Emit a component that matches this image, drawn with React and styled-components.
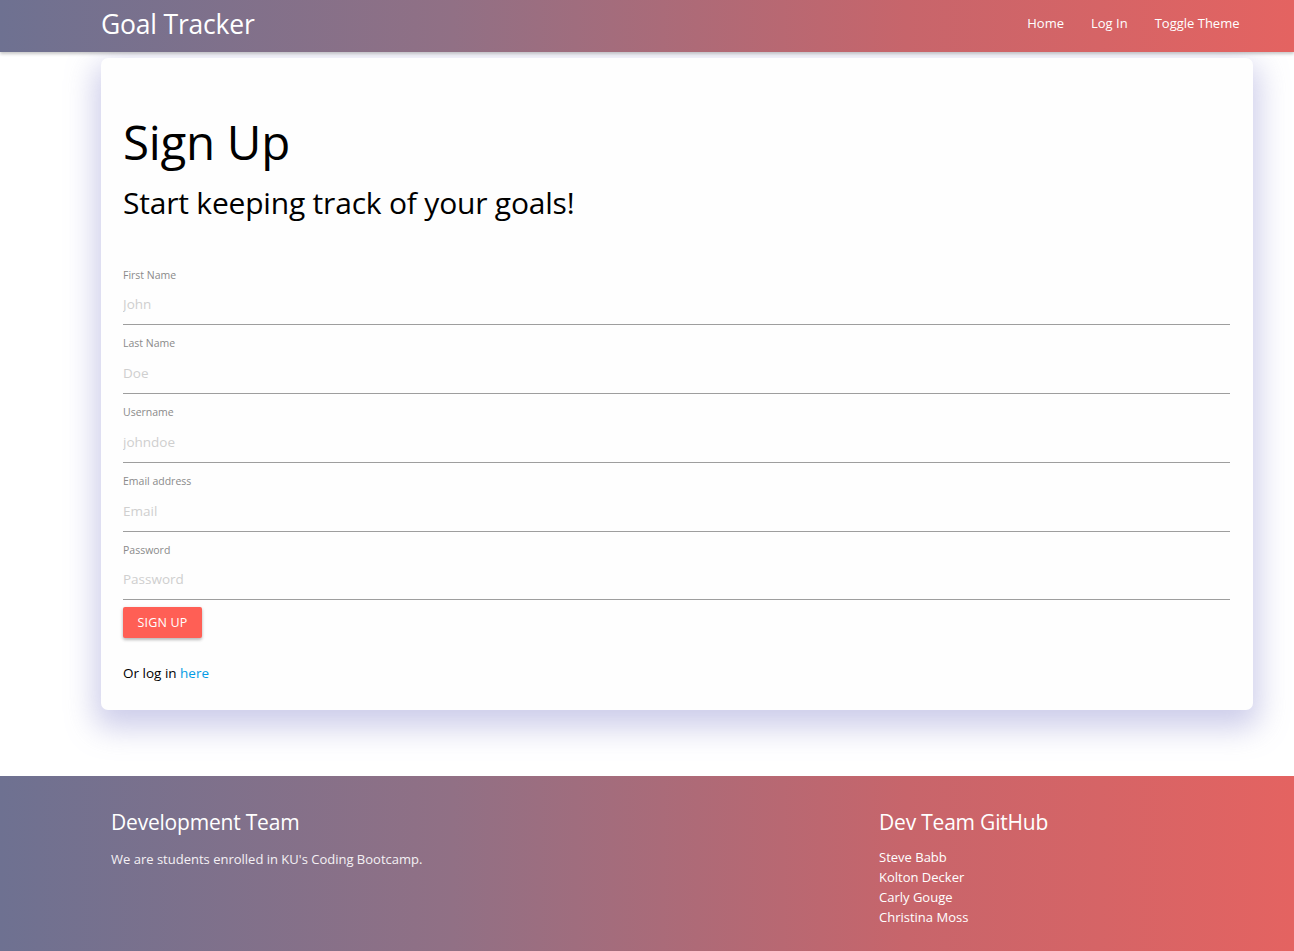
import React from "react";
import styled, { createGlobalStyle } from "styled-components";

const Global = createGlobalStyle`
  html, body { margin: 0; padding: 0; }
  body {
    font-family: "Open Sans", "Noto Sans", sans-serif;
    background: #ffffff;
    color: #000;
  }
  * { box-sizing: border-box; }
`;

const gradient = "linear-gradient(90deg, #6e7191 0%, #917085 35%, #c7656b 70%, #e46361 100%)";

const Page = styled.div`
  min-height: 951px;
  display: flex;
  flex-direction: column;
`;

const Nav = styled.nav`
  height: 52px;
  background: ${gradient};
  box-shadow: 0 2px 3px rgba(0, 0, 0, 0.22);
  position: relative;
  z-index: 2;
`;

const Container = styled.div`
  width: 1152px;
  margin: 0 0 0 101px;
`;

const NavInner = styled(Container)`
  height: 100%;
  display: flex;
  align-items: center;
  justify-content: space-between;
`;

const Brand = styled.a`
  color: #fff;
  font-size: 26.5px;
  letter-spacing: -0.2px;
  text-decoration: none;
  line-height: 1;
  margin-top: -4px;
`;

const NavLinks = styled.ul`
  list-style: none;
  margin: 0;
  padding: 0;
  display: flex;
  margin-top: -6px;
`;

const NavLink = styled.a`
  color: #fff;
  font-size: 13px;
  padding: 0 13.5px;
  text-decoration: none;
  display: block;
`;

const Main = styled.main`
  flex: 1;
  padding: 6px 0 64px;
`;

const Card = styled.div`
  background: #fefefe;
  border-radius: 7px;
  box-shadow: 0 12px 30px 6px rgba(135, 135, 205, 0.42);
  padding: 60px 23px 28px 22px;
`;

const Title = styled.h1`
  font-weight: 400;
  font-size: 47.5px;
  line-height: 1;
  margin: 0;
  letter-spacing: -0.3px;
`;

const Subtitle = styled.h4`
  font-weight: 400;
  font-size: 30px;
  line-height: 1;
  margin: 22px 0 39px;
  letter-spacing: -0.2px;
`;

const Field = styled.div`
  display: flex;
  flex-direction: column;
  padding-top: 11px;
`;

const Label = styled.label`
  font-size: 10.5px;
  color: #8a8a8a;
  line-height: 14px;
`;

const Input = styled.input`
  border: none;
  border-bottom: 1px solid #9e9e9e;
  background: transparent;
  outline: none;
  height: 43.75px;
  padding: 3px 0 0;
  font-family: inherit;
  font-size: 13.5px;
  color: #000;
  &::placeholder { color: #cfcfcf; }
`;

const Button = styled.button`
  margin-top: 7px;
  width: 79px;
  height: 31px;
  background: #ff5f55;
  border: none;
  border-radius: 2px;
  color: #fff;
  font-family: inherit;
  font-size: 12.5px;
  font-weight: 500;
  letter-spacing: 0.2px;
  box-shadow: 0 2px 3px rgba(0, 0, 0, 0.2), 0 1px 4px rgba(0, 0, 0, 0.12);
  cursor: pointer;
`;

const Note = styled.p`
  margin: 26px 0 0;
  font-size: 13.5px;
`;

const Link = styled.a`
  color: #039be5;
  text-decoration: none;
`;

const Footer = styled.footer`
  background: ${gradient};
  height: 175px;
  color: #fff;
`;

const FooterGrid = styled(Container)`
  display: grid;
  grid-template-columns: 8fr 4fr;
  padding-top: 33px;
`;

const FooterCol = styled.div`
  padding: 0 10px;
`;

const FooterTitle = styled.h5`
  font-weight: 400;
  font-size: 21px;
  margin: 0 0 ${p => p.$gap}px;
  line-height: 1.3;
  letter-spacing: -0.2px;
`;

const FooterText = styled.p`
  margin: 0;
  font-size: 13px;
  color: #f4f0f4;
`;

const FooterList = styled.ul`
  list-style: none;
  margin: 0;
  padding: 0;
`;

const FooterItem = styled.li`
  font-size: 13px;
  line-height: 20px;
  color: #fff;
`;

const fields = [
  ["First Name", "John", "text"],
  ["Last Name", "Doe", "text"],
  ["Username", "johndoe", "text"],
  ["Email address", "Email", "email"],
  ["Password", "Password", "password"],
];

export default function App() {
  return (
    <Page>
      <Global />
      <Nav>
        <NavInner>
          <Brand href="#">Goal Tracker</Brand>
          <NavLinks>
            <li><NavLink href="#">Home</NavLink></li>
            <li><NavLink href="#">Log In</NavLink></li>
            <li><NavLink href="#">Toggle Theme</NavLink></li>
          </NavLinks>
        </NavInner>
      </Nav>
      <Main>
        <Container>
          <Card>
            <Title>Sign Up</Title>
            <Subtitle>Start keeping track of your goals!</Subtitle>
            {fields.map(([label, ph, type]) => (
              <Field key={label}>
                <Label>{label}</Label>
                <Input type={type} placeholder={ph} />
              </Field>
            ))}
            <Button>SIGN UP</Button>
            <Note>Or log in <Link href="#">here</Link></Note>
          </Card>
        </Container>
      </Main>
      <Footer>
        <FooterGrid>
          <FooterCol>
            <FooterTitle $gap={14}>Development Team</FooterTitle>
            <FooterText>We are students enrolled in KU's Coding Bootcamp.</FooterText>
          </FooterCol>
          <FooterCol>
            <FooterTitle $gap={11}>Dev Team GitHub</FooterTitle>
            <FooterList>
              <FooterItem>Steve Babb</FooterItem>
              <FooterItem>Kolton Decker</FooterItem>
              <FooterItem>Carly Gouge</FooterItem>
              <FooterItem>Christina Moss</FooterItem>
            </FooterList>
          </FooterCol>
        </FooterGrid>
      </Footer>
    </Page>
  );
}
